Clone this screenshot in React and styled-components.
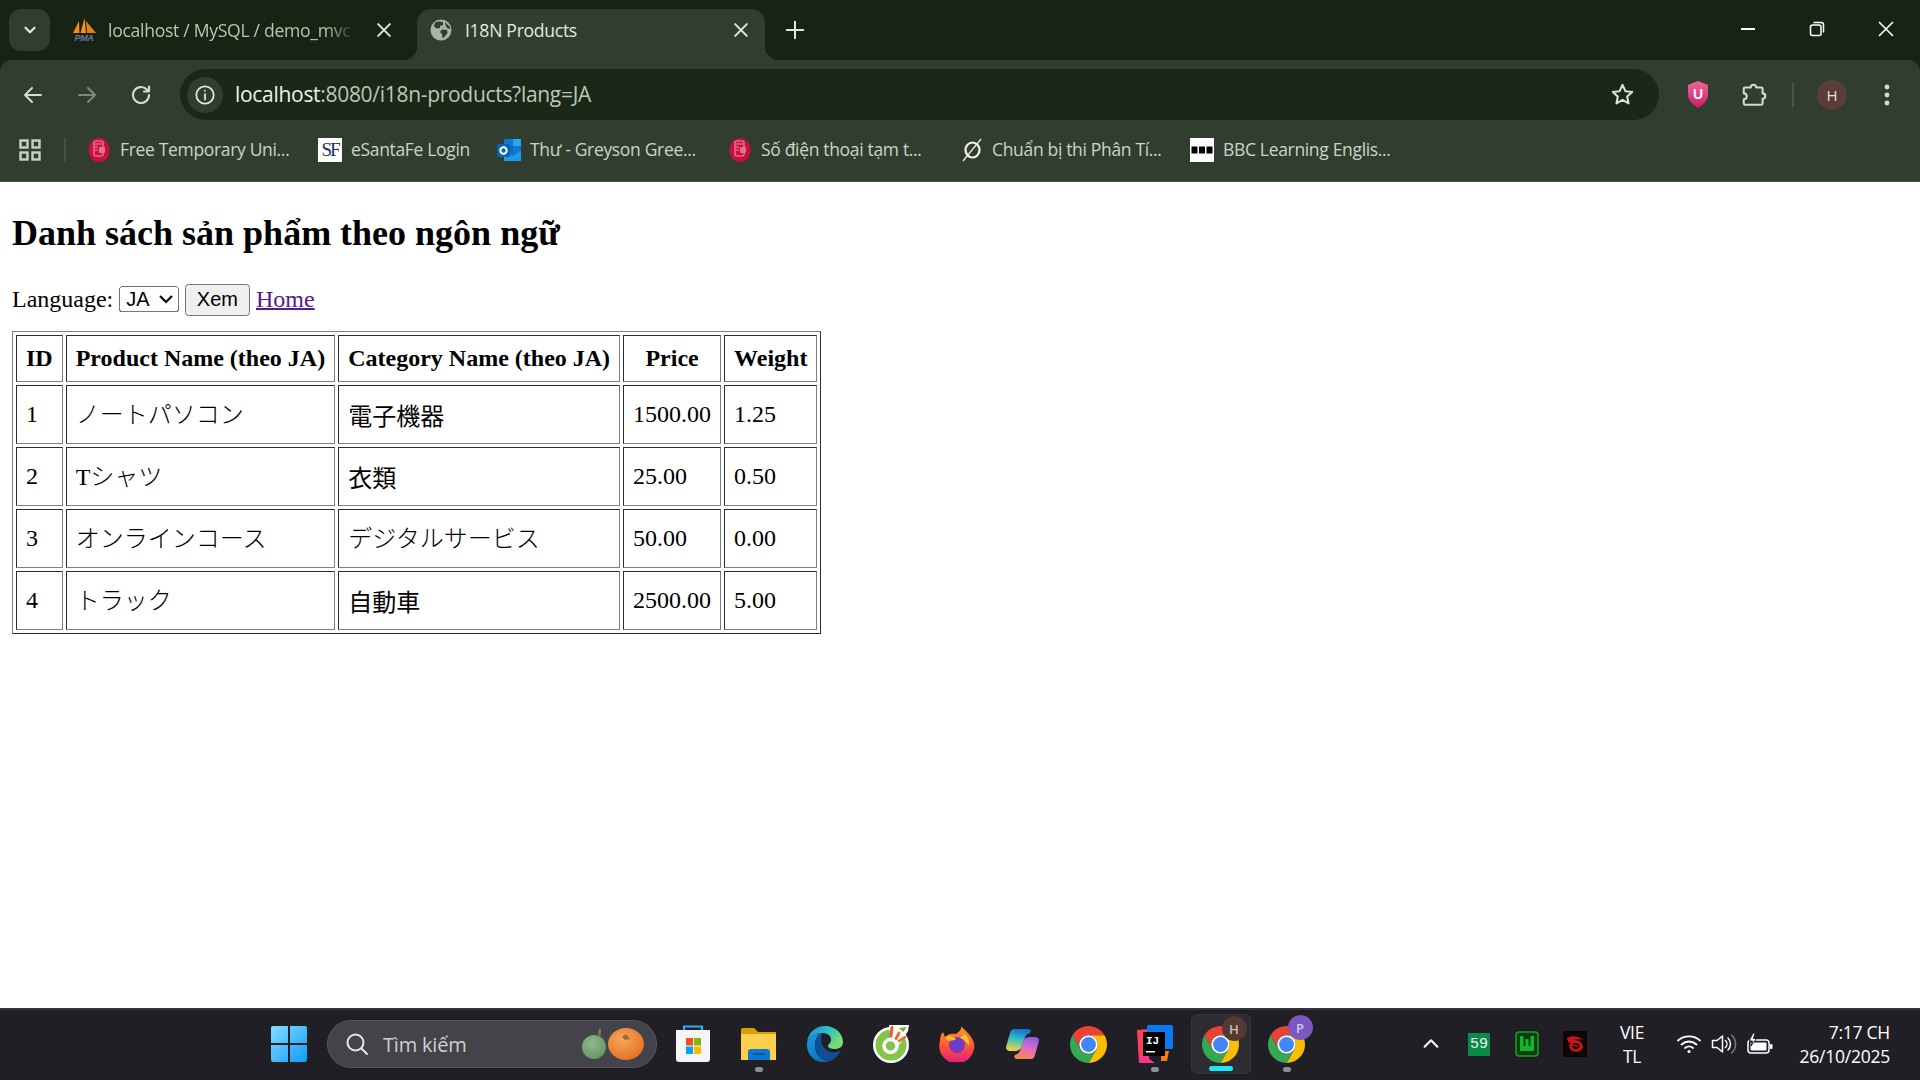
import React from "react";
import styled, { createGlobalStyle } from "styled-components";

const UI = `"Open Sans", "Noto Sans", sans-serif`;

const Global = createGlobalStyle`
  html, body { margin: 0; padding: 0; height: 100%; overflow: hidden; background: #fff; }
  #root { height: 100%; }
`;

const Screen = styled.div`
  width: 1920px; height: 1080px; display: flex; flex-direction: column; overflow: hidden;
`;

/* ---------- tab strip ---------- */
const TabStrip = styled.div`
  height: 60px; flex: none; background: #172413; display: flex; align-items: flex-start; padding: 9px 0 0 9px; box-sizing: border-box;
`;
const TabSearch = styled.div`
  width: 41px; height: 42px; border-radius: 12px; background: #313d2e; display: flex; align-items: center; justify-content: center; margin-right: 10px; color: #dfe8da;
`;
const Tab = styled.div`
  position: relative; width: 348px; height: 51px; margin-right: 9px; display: flex; align-items: center; box-sizing: border-box; padding: 0 14px 9px 12px;
  border-radius: 14px 14px 0 0; font: 400 17.6px ${UI}; letter-spacing: -0.3px;
  background: ${p => (p.$active ? "#313d2e" : "transparent")};
  color: ${p => (p.$active ? "#e3ebde" : "#b7c5b1")};
  ${p => p.$active && `
    &::before, &::after { content: ""; position: absolute; bottom: 0; width: 14px; height: 14px; }
    &::before { left: -14px; background: radial-gradient(circle at 0 0, transparent 14px, #313d2e 14.5px); }
    &::after { right: -14px; background: radial-gradient(circle at 100% 0, transparent 14px, #313d2e 14.5px); }
  `}
`;
const Favicon = styled.span`
  width: 24px; height: 24px; flex: none; display: flex; align-items: center; justify-content: center; margin-right: 12px;
`;
const TabTitle = styled.span`
  flex: 1; white-space: nowrap; overflow: hidden; margin-right: 18px;
  ${p => p.$fade && `-webkit-mask-image: linear-gradient(90deg, #000 88%, transparent 100%); mask-image: linear-gradient(90deg, #000 88%, transparent 100%);`}
`;
const TabClose = styled.span`
  width: 20px; height: 20px; flex: none; display: flex; align-items: center; justify-content: center; color: #dfe8da;
`;
const NewTab = styled.div`
  width: 26px; height: 42px; margin-left: 8px; display: flex; align-items: center; justify-content: center; color: #dfe8da;
`;
const WindowControls = styled.div`
  margin-left: auto; display: flex; height: 42px; margin-top: -1px; color: #fff;
`;
const WindowButton = styled.div`
  width: 69px; height: 42px; display: flex; align-items: center; justify-content: center;
`;

/* ---------- toolbar ---------- */
const Toolbar = styled.div`
  height: 122px; flex: none; box-sizing: border-box; background: #313d2e; border-radius: 12px 12px 0 0; border-bottom: 1px solid #4b4f4a; display: flex; flex-direction: column; margin-top: 0;
`;
const ToolbarBackdrop = styled.div`
  background: #172413; flex: none;
`;
const NavRow = styled.div`
  height: 69px; display: flex; align-items: center; padding: 0 0 0 6px; flex: none; box-sizing: border-box;
`;
const NavButton = styled.div`
  width: ${p => p.$w || 54}px; height: 40px; flex: none; display: flex; align-items: center; justify-content: center;
  color: ${p => (p.$dim ? "#7d8a78" : "#d3dccf")};
`;
const Omnibox = styled.div`
  width: 1479px; height: 51px; margin: 0 11px 0 12px; flex: none; background: #1b2717; border-radius: 26px; display: flex; align-items: center; box-sizing: border-box; padding: 0 24px 0 7px;
`;
const InfoChip = styled.div`
  width: 36px; height: 36px; border-radius: 50%; background: #313d2e; flex: none; display: flex; align-items: center; justify-content: center; color: #e3ebde;
`;
const Url = styled.div`
  margin: 0 0 2px 12px; font: 400 21px ${UI}; letter-spacing: -0.3px; color: #bcc8b6; white-space: nowrap;
`;
const UrlHost = styled.span`
  color: #eef3ea;
`;
const StarSlot = styled.div`
  margin-left: auto; display: flex; color: #dce5d7;
`;
const Separator = styled.div`
  width: 2px; height: 24px; background: #4a5746;
`;
const Avatar = styled.div`
  width: 30px; height: 30px; border-radius: 50%; background: #5b3d38; color: #eadfdc; font: 400 15px ${UI}; display: flex; align-items: center; justify-content: center;
`;
const BookmarkRow = styled.div`
  height: 52px; display: flex; align-items: flex-start; padding: 9px 0 0 0; box-sizing: border-box;
`;
const AppsSlot = styled.div`
  width: 46px; height: 24px; margin-left: 18px; flex: none; display: flex; align-items: center; color: #c9d3c4;
`;
const BookmarkDivider = styled.div`
  width: 2px; height: 24px; background: #46523f; margin-right: 22px; flex: none;
`;
const Bookmark = styled.div`
  display: flex; align-items: center; height: 24px; flex: none; width: ${p => p.$w}px;
`;
const BookmarkIcon = styled.span`
  width: ${p => p.$w || 24}px; height: 24px; flex: none; display: flex; align-items: center; justify-content: center; margin-right: ${p => p.$gap || 9}px;
  ${p => p.$white && "background: #fff;"}
`;
const BookmarkLabel = styled.span`
  font: 400 17.5px/24px ${UI}; letter-spacing: -0.33px; color: #cbd5c6; white-space: nowrap; margin-top: -2px;
`;
const SfLogo = styled.span`
  font: 400 19px "Liberation Serif", serif; color: #1d2f57; letter-spacing: -2px;
`;

/* ---------- page ---------- */
const Page = styled.main`
  flex: 1; min-height: 0; background: #fff; overflow: hidden;
`;
const Content = styled.div`
  zoom: 1.5; padding: 0 8px; display: flow-root; color: #000;
  font: 400 16px "Liberation Serif", "Noto Sans CJK JP", serif;
`;
const Heading = styled.h2`
  font-size: 24px; font-weight: 700; margin: 19.92px 0;
`;
const FilterForm = styled.form`
  margin: 0 0 10px;
`;
const LangSelect = styled.select`
  font: 400 13.333px "Liberation Sans", sans-serif; width: 39.7px;
`;
const SubmitButton = styled.button`
  font: 400 13.333px "Liberation Sans", sans-serif;
`;
const HomeLink = styled.a`
  color: #551a8b; text-decoration: underline;
`;
const Table = styled.table`
  border: 1px outset #808080; border-spacing: 2px; border-collapse: separate;
`;
const Th = styled.th`
  border: 1px inset #808080; padding: 6px; height: 31.3px; box-sizing: border-box; font-weight: 700; text-align: center; white-space: nowrap;
`;
const Td = styled.td`
  border: 1px inset #808080; height: 39.3px; box-sizing: border-box; white-space: nowrap;
  padding: ${p => (p.$kana ? "5px 6px 7px" : "6px")};
  font-weight: ${p => (p.$kana ? 300 : 400)};
`;

/* ---------- taskbar ---------- */
const Taskbar = styled.footer`
  height: 72px; flex: none; box-sizing: border-box; background: #201f26; border-top: 2px solid #35353b; display: flex; align-items: center; padding: 0 0 2px 256px; position: relative; color: #fff;
`;
const TaskItem = styled.div`
  width: 66px; height: 60px; flex: none; display: flex; align-items: center; justify-content: center; position: relative; box-sizing: border-box;
  ${p => p.$active && "background: #2c2c32; border-radius: 6px; border: 1px solid #34343a; width: 60px; margin: 0 3px;"}
`;
const RunDot = styled.span`
  position: absolute; left: 50%; bottom: 2px; transform: translateX(-50%); height: 5px; border-radius: 3px;
  width: ${p => (p.$wide ? 24 : 8)}px; background: ${p => (p.$wide ? "#1fe6f5" : "#8e8e93")};
`;
const Badge = styled.span`
  position: absolute; top: 1px; right: ${p => p.$r}px; width: 25px; height: 25px; border-radius: 50%;
  background: ${p => p.$bg}; color: ${p => p.$fg}; font: 600 13px ${UI}; display: flex; align-items: center; justify-content: center;
`;
const SearchBox = styled.div`
  width: 330px; height: 48px; flex: none; box-sizing: border-box; margin: 0 2.5px 0 5px; background: #434349; border: 1px solid #55555b; border-radius: 24px; display: flex; align-items: center; padding: 0 12px 0 17px; color: #e8e8e8;
`;
const SearchText = styled.span`
  font: 400 20px ${UI}; color: #cfcfd2; margin-left: 14px; letter-spacing: -0.2px;
`;
const SearchArt = styled.span`
  margin-left: auto; display: flex;
`;
const Tray = styled.div`
  margin-left: auto; display: flex; align-items: center; height: 100%; padding-right: 30px;
`;
const TrayIcon = styled.div`
  width: ${p => p.$w}px; flex: none; display: flex; justify-content: center; align-items: center;
`;
const GreenCount = styled.div`
  width: 22px; height: 23px; background: #0c8a47; color: #e8f7ee; font: 400 15px "Liberation Mono", monospace; display: flex; align-items: center; justify-content: center;
`;
const Lang = styled.div`
  width: 66px; margin-right: 7px; text-align: center; font: 400 17.5px/24px ${UI}; letter-spacing: -0.3px; flex: none;
`;
const Clock = styled.div`
  text-align: right; font: 400 17.5px/24px ${UI}; letter-spacing: -0.25px; flex: none; width: 112px;
`;

/* ---------- icons ---------- */
const Svg = ({ s = 24, vb = "0 0 24 24", children }) => (
  <svg width={s} height={s} viewBox={vb} fill="none">{children}</svg>
);
const Stroke = ({ s = 24, w = 2, children }) => (
  <svg width={s} height={s} viewBox="0 0 24 24" fill="none" stroke="currentColor" strokeWidth={w} strokeLinecap="round" strokeLinejoin="round">{children}</svg>
);
const PmaIcon = () => (
  <Svg>
    <path d="M1 15 7 3 7.500 15Z" fill="#f58a1f" />
    <path d="M8.500 15 12.500 0 14 15Z" fill="#f7941d" />
    <path d="M15 15 14 3 24 15Z" fill="#e98012" />
    <text x="12" y="22.500" textAnchor="middle" fontFamily="Liberation Sans" fontStyle="italic" fontWeight="700" fontSize="9" fill="#6a76b0">PMA</text>
  </Svg>
);
const GlobeIcon = () => (
  <svg width="22" height="22" viewBox="0 0 22 22">
    <circle cx="11" cy="11" r="10.500" fill="#aab3a7" />
    <path d="M5 3.500 9 2.500 13 3 13 6 10 7 10 9 7 9.500 4 7.500ZM12 10.500 17 11 17.500 14 14.500 18 12.500 19 12 15 10 13ZM15 3 20 8 20.500 10 17 9 15.500 6Z" fill="#313d2e" />
  </svg>
);
const ChromeLogo = ({ s = 37 }) => (
  <svg width={s} height={s} viewBox="4 4 40 40">
    <path d="M6.680 14A20 20 0 0 1 41.320 14L24 14A10 10 0 0 0 15.340 29Z" fill="#ea4335" />
    <path d="M41.320 14A20 20 0 0 1 24 44L32.660 29A10 10 0 0 0 24 14Z" fill="#fbbc04" />
    <path d="M24 44A20 20 0 0 1 6.680 14L15.340 29A10 10 0 0 0 32.660 29Z" fill="#34a853" />
    <circle cx="24" cy="24" r="10" fill="#fff" />
    <circle cx="24" cy="24" r="8" fill="#4285f4" />
  </svg>
);
const TempMail = () => (
  <svg width="22" height="24" viewBox="0 0 22 24">
    <ellipse cx="11" cy="12" rx="10.500" ry="12" fill="#c8103f" />
    <rect x="6" y="3" width="9" height="15" rx="1.500" fill="none" stroke="#eb8ea6" strokeWidth="1.200" />
    <rect x="11" y="9" width="6" height="6" rx="1" fill="#e5708e" />
    <path d="M7 6h7M7 9h3M7 12h3" stroke="#eb8ea6" />
  </svg>
);
const OutlookIcon = () => (
  <svg width="25" height="24" viewBox="0 0 25 24">
    <rect x="7" y="1" width="17" height="22" rx="1.500" fill="#0f78d4" />
    <rect x="16" y="1" width="8" height="7" fill="#28a8ea" />
    <rect x="7" y="8" width="9" height="7" fill="#0f6cbd" />
    <path d="M7 14l8.500 4 8.500-5V23H7Z" fill="#1e9be6" />
    <rect x="0" y="6" width="13" height="13" rx="1.500" fill="#0a64b5" />
    <circle cx="6.500" cy="12.500" r="3.200" fill="none" stroke="#fff" strokeWidth="2" />
  </svg>
);
const NoSymbol = () => (
  <svg width="25" height="24" viewBox="0 0 25 24" fill="none" stroke="#f1f4ef">
    <ellipse cx="12.500" cy="12" rx="7" ry="7.500" strokeWidth="2.200" />
    <path d="M21 1 3 23" strokeWidth="1.200" />
  </svg>
);
const BbcIcon = () => (
  <svg width="24" height="24" viewBox="0 0 24 24">
    <rect x="1.500" y="8.500" width="6" height="7" fill="#000" />
    <rect x="9" y="8.500" width="6" height="7" fill="#000" />
    <rect x="16.500" y="8.500" width="6" height="7" fill="#000" />
  </svg>
);
const ShieldU = () => (
  <svg width="22" height="27" viewBox="0 0 22 27">
    <defs>
      <linearGradient id="sh" x1="0" y1="0" x2="0" y2="1">
        <stop offset="0" stopColor="#f0669a" /><stop offset="1" stopColor="#cf1a63" />
      </linearGradient>
    </defs>
    <path d="M11 0 21 4V14C21 20 15 24.500 11 27 7 24.500 1 20 1 14V4Z" fill="url(#sh)" />
    <text x="11" y="18" textAnchor="middle" fontFamily="Liberation Sans" fontWeight="700" fontSize="14" fill="#fff">U</text>
  </svg>
);
const PuzzleIcon = () => (
  <svg width="28" height="28" viewBox="0 0 26 26" fill="none" stroke="currentColor" strokeWidth="1.900" strokeLinejoin="round">
    <path d="M4.500 6H10a2.500 2.500 0 0 1 5 0H20a1 1 0 0 1 1 1v4.500a2.500 2.500 0 0 1 0 5V21a1 1 0 0 1-1 1H4.500a1 1 0 0 1-1-1V17a2.500 2.500 0 0 0 0-5.500V7a1 1 0 0 1 1-1Z" />
  </svg>
);
const DotsIcon = () => (
  <svg width="6" height="24" viewBox="0 0 6 24" fill="currentColor">
    <circle cx="3" cy="4" r="2.400" /><circle cx="3" cy="12" r="2.400" /><circle cx="3" cy="20" r="2.400" />
  </svg>
);
const AppsIcon = () => (
  <svg width="24" height="24" viewBox="0 0 24 24" fill="none" stroke="currentColor" strokeWidth="2.400">
    <rect x="2.500" y="2.500" width="7" height="7" /><rect x="14.500" y="2.500" width="7" height="7" />
    <rect x="2.500" y="14.500" width="7" height="7" /><rect x="14.500" y="14.500" width="7" height="7" />
  </svg>
);
const StartIcon = () => (
  <svg width="36" height="36" viewBox="0 0 36 36">
    <defs>
      <linearGradient id="st" x1="0" y1="0" x2="1" y2="1">
        <stop offset="0" stopColor="#86dcff" /><stop offset="1" stopColor="#0d9cf5" />
      </linearGradient>
    </defs>
    <path d="M2 0H17V17H0V2A2 2 0 0 1 2 0ZM19 0H34A2 2 0 0 1 36 2V17H19ZM0 19H17V36H2A2 2 0 0 1 0 34ZM19 19H36V34A2 2 0 0 1 34 36H19Z" fill="url(#st)" />
  </svg>
);
const StoreIcon = () => (
  <svg width="36" height="38" viewBox="0 0 36 38">
    <path d="M9 6V1.500H27V6" fill="none" stroke="#27b0ee" strokeWidth="2.200" />
    <path d="M1 5H35V34A3 3 0 0 1 32 37H4A3 3 0 0 1 1 34Z" fill="#f6f6f6" />
    <rect x="11" y="13" width="7" height="7.500" fill="#f25022" />
    <rect x="19" y="13" width="7" height="7.500" fill="#7fba00" />
    <rect x="11" y="21.500" width="7" height="7.500" fill="#00a4ef" />
    <rect x="19" y="21.500" width="7" height="7.500" fill="#ffb900" />
  </svg>
);
const FolderIcon = () => (
  <svg width="37" height="34" viewBox="0 0 37 34">
    <path d="M1 3A2 2 0 0 1 3 1H14L18 5H36V33H1Z" fill="#d6a200" />
    <path d="M1 7H36V33H1Z" fill="#fdcf4a" />
    <path d="M8 33V25A3 3 0 0 1 11 22H27A3 3 0 0 1 30 25V33Z" fill="#0d77d1" />
    <rect x="13" y="26" width="12" height="2" fill="#07559e" />
  </svg>
);
const EdgeIcon = () => (
  <svg width="36" height="36" viewBox="0 0 36 36">
    <defs>
      <linearGradient id="ed" x1="0" y1="0" x2="1" y2="0.500">
        <stop offset="0" stopColor="#1a8fd8" /><stop offset="0.550" stopColor="#2fbfc4" /><stop offset="1" stopColor="#78e06a" />
      </linearGradient>
      <linearGradient id="ed2" x1="0" y1="0" x2="0.600" y2="1">
        <stop offset="0" stopColor="#1a9be0" /><stop offset="1" stopColor="#1170c4" />
      </linearGradient>
    </defs>
    <path d="M0 17C1 6 9 0 18 0C29 0 36 8 36 16C36 21 32 23 28 23C24 23 21 22 21 20C21 18 24 17 24 14C24 9 20 7 15 7C8 7 2 10 0 17Z" fill="url(#ed)" />
    <path d="M0 17C2 10 8 7 15 7C10 9 8 14 8 20C8 28 13 33 21 35.500C19.500 36 18 36 17 36C7 36 -1 28 0 17Z" fill="url(#ed2)" />
    <path d="M15 7C10 9 8 14 8 20C8 28 13 33 21 35.500C27 34.500 32 29 34 24C30 27 24 27 20 24.500C15 21 13 16 15 7Z" fill="#0f4f95" />
  </svg>
);
const CocCocIcon = () => (
  <svg width="36" height="38" viewBox="0 0 36 38">
    <circle cx="18" cy="20" r="18" fill="#fff" />
    <circle cx="18" cy="20" r="15.500" fill="#83c548" />
    <path d="M16 0H36L35 6 26 20 18 16Z" fill="#fff" />
    <circle cx="17.500" cy="21" r="6.500" fill="#83c548" stroke="#fff" strokeWidth="3.500" />
    <path d="M19 2.500 18 11" stroke="#ef5a2e" strokeWidth="3" strokeLinecap="round" />
    <path d="M26 8 23 13.500" stroke="#ef6a2e" strokeWidth="3" strokeLinecap="round" />
    <path d="M32 12 26 16" stroke="#ef6a2e" strokeWidth="2.500" strokeLinecap="round" />
    <path d="M26 3 34 2 30 7Z" fill="#6fb33f" />
  </svg>
);
const FirefoxIcon = () => (
  <svg width="36" height="36" viewBox="0 0 36 36">
    <defs>
      <linearGradient id="ff" x1="0.500" y1="0" x2="0.500" y2="1">
        <stop offset="0" stopColor="#ff9a1f" /><stop offset="0.600" stopColor="#ff4f3a" /><stop offset="1" stopColor="#e31587" />
      </linearGradient>
    </defs>
    <path d="M22 0C25 4 33 9 35 17A17.500 17.500 0 1 1 1 15C1 11 2 8 4 6L6 11C9 8 13 7 17 8 21 5 23 3 22 0Z" fill="url(#ff)" />
    <circle cx="18" cy="19" r="8" fill="#6e3cc6" />
    <path d="M6 11C10 9 14 10 17 13 15 15 11 15 8 14Z" fill="#ffbd1f" />
    <path d="M26 8C29 11 31 15 30 20 28 16 25 13 21 12Z" fill="#ffca2b" />
  </svg>
);
const CopilotIcon = () => (
  <svg width="33" height="30" viewBox="0 0 33 30">
    <defs>
      <linearGradient id="c1" x1="0.500" y1="0" x2="0.300" y2="1">
        <stop offset="0" stopColor="#1470e0" /><stop offset="0.450" stopColor="#33c0bd" /><stop offset="1" stopColor="#f5d53a" />
      </linearGradient>
      <linearGradient id="c2" x1="0.700" y1="0" x2="0.400" y2="1">
        <stop offset="0" stopColor="#8a5ee6" /><stop offset="0.550" stopColor="#e56cc0" /><stop offset="1" stopColor="#fa8a4d" />
      </linearGradient>
    </defs>
    <path d="M8 0H22C25 0 25 2 24 4C20 5 19 8 18 11L16 17C15 21 12 22 8 22H4C1 22-.5 20 .3 17L4 4C5 1 6 0 8 0Z" fill="url(#c1)" />
    <path d="M25 30H11C8 30 8 28 9 26C13 25 14 22 15 19L17 13C18 9 21 8 25 8H29C32 8 33.500 10 32.700 13L29 26C28 29 27 30 25 30Z" fill="url(#c2)" />
  </svg>
);
const IntellijIcon = () => (
  <svg width="36" height="38" viewBox="0 0 36 38">
    <path d="M0 5 12 4 12 36 2 38Z" fill="#fd3f5c" />
    <rect x="10" y="0" width="26" height="24" rx="1.500" fill="#0a78f0" />
    <path d="M24 26H32L30 36H24Z" fill="#f97a12" />
    <path d="M4 28 18 38H3Z" fill="#ff318c" />
    <rect x="6" y="7" width="22" height="24" fill="#000" />
    <text x="9" y="19" fontFamily="Liberation Mono" fontWeight="700" fontSize="11" fill="#fff">IJ</text>
    <rect x="9" y="26" width="9" height="1.500" fill="#fff" />
  </svg>
);
const Gourds = () => (
  <svg width="62" height="34" viewBox="0 0 62 34">
    <defs>
      <radialGradient id="pk" cx="0.400" cy="0.350" r="0.800">
        <stop offset="0" stopColor="#f9a65a" /><stop offset="1" stopColor="#dd6a1c" />
      </radialGradient>
      <radialGradient id="gr" cx="0.400" cy="0.350" r="0.800">
        <stop offset="0" stopColor="#93b88c" /><stop offset="1" stopColor="#5c8f62" />
      </radialGradient>
    </defs>
    <path d="M16 8 17 2 19 2 18.500 9Z" fill="#8a7a55" />
    <ellipse cx="12" cy="20" rx="12" ry="12" fill="url(#gr)" />
    <ellipse cx="44" cy="17" rx="18" ry="16" fill="url(#pk)" />
    <path d="M40 10 44 7 48 12 43 13Z" fill="#a16a35" />
  </svg>
);
const WifiIcon = () => (
  <svg width="24" height="20" viewBox="0 0 24 20" fill="none" stroke="#fff" strokeWidth="1.800" strokeLinecap="round">
    <path d="M1 6.500C7 1 17 1 23 6.500M4.500 10.500C9 6.500 15 6.500 19.500 10.500M8 14C10.500 12 13.500 12 16 14" />
    <circle cx="12" cy="17.500" r="1.500" fill="#fff" stroke="none" />
  </svg>
);
const SpeakerIcon = () => (
  <svg width="26" height="24" viewBox="0 0 26 24" fill="none" stroke="#fff" strokeWidth="1.500" strokeLinejoin="round">
    <path d="M1.500 8.500H6L11.500 4V20L6 15.500H1.500Z" />
    <path d="M14.500 8.500A5 5 0 0 1 14.500 15.500M17 6A8.500 8.500 0 0 1 17 18" strokeLinecap="round" />
    <path d="M20.500 3A12 12 0 0 1 20.500 21" stroke="#77777c" strokeLinecap="round" />
  </svg>
);
const BatteryIcon = () => (
  <svg width="26" height="22" viewBox="0 0 26 22" fill="none">
    <rect x="1" y="7" width="21" height="13" rx="3" stroke="#fff" strokeWidth="1.500" />
    <rect x="3.500" y="9.500" width="16" height="8" rx="1" fill="#fff" />
    <rect x="23" y="11" width="2.500" height="5" rx="1" fill="#fff" />
    <path d="M6 0 2 8H5.500L4 13 9.500 5.500H6.500L8 0Z" fill="#fff" stroke="#201f26" strokeWidth="1" />
  </svg>
);
const WIcon = () => (
  <svg width="24" height="26" viewBox="0 0 24 26">
    <rect x="1" y="1" width="22" height="24" rx="3" fill="#0a3d10" stroke="#16a320" strokeWidth="1.500" />
    <path d="M5 5V20H19V5H15.500V15H13.500V8H10.500V15H8.500V5Z" fill="#15b52a" />
  </svg>
);
const GarenaIcon = () => (
  <svg width="24" height="26" viewBox="0 0 24 26">
    <rect width="24" height="26" fill="#0e0506" />
    <path d="M4 7C9 4 15 5 21 9 17 8 14 8 11 9 16 9 20 12 20 16 19 20 14 22 10 20 6 19 5 14 8 12 6 12 4 10 4 7Z" fill="#c8141c" />
    <path d="M10 14C12 12 16 13 16 15.500 15 18 11 18 10 16H14" fill="none" stroke="#0e0506" strokeWidth="1.500" />
  </svg>
);

const rows = [
  { id: "1", name: "ノートパソコン", cat: "電子機器", catKana: false, price: "1500.00", weight: "1.25" },
  { id: "2", name: "Tシャツ", cat: "衣類", catKana: false, price: "25.00", weight: "0.50" },
  { id: "3", name: "オンラインコース", cat: "デジタルサービス", catKana: true, price: "50.00", weight: "0.00" },
  { id: "4", name: "トラック", cat: "自動車", catKana: false, price: "2500.00", weight: "5.00" },
];

export default function App() {
  return (
    <Screen>
      <Global />
      <TabStrip>
        <TabSearch>
          <Stroke s={18} w={3}><path d="M6 9l6 6 6-6" /></Stroke>
        </TabSearch>
        <Tab>
          <Favicon><PmaIcon /></Favicon>
          <TabTitle $fade>localhost / MySQL / demo_mvc</TabTitle>
          <TabClose><Stroke s={20} w={2.400}><path d="M5 5l14 14M19 5 5 19" /></Stroke></TabClose>
        </Tab>
        <Tab $active>
          <Favicon><GlobeIcon /></Favicon>
          <TabTitle>I18N Products</TabTitle>
          <TabClose><Stroke s={20} w={2.400}><path d="M5 5l14 14M19 5 5 19" /></Stroke></TabClose>
        </Tab>
        <NewTab><Stroke s={22} w={2.200}><path d="M12 3v18M3 12h18" /></Stroke></NewTab>
        <WindowControls>
          <WindowButton><svg width="14" height="2"><rect width="14" height="2" fill="#fff" /></svg></WindowButton>
          <WindowButton>
            <svg width="16" height="16" viewBox="0 0 16 16" fill="none" stroke="#fff" strokeWidth="1.500">
              <rect x="1.500" y="4" width="10.500" height="10.500" rx="2" />
              <path d="M4.500 1.500H12A2.500 2.500 0 0 1 14.500 4V11.500" />
            </svg>
          </WindowButton>
          <WindowButton>
            <svg width="16" height="16" viewBox="0 0 16 16" stroke="#fff" strokeWidth="1.600"><path d="M1 1l14 14M15 1 1 15" /></svg>
          </WindowButton>
        </WindowControls>
      </TabStrip>

      <ToolbarBackdrop>
        <Toolbar>
          <NavRow>
            <NavButton><Stroke s={24} w={2}><path d="M20 12H5M11 5l-7 7 7 7" /></Stroke></NavButton>
            <NavButton $dim><Stroke s={24} w={2}><path d="M4 12h15M13 5l7 7-7 7" /></Stroke></NavButton>
            <NavButton>
              <Stroke s={24} w={2.100}><path d="M20 12a8 8 0 1 1-2.400-5.700L20 8.500M20 3.500v5h-5" /></Stroke>
            </NavButton>
            <Omnibox>
              <InfoChip>
                <Stroke s={22} w={1.900}><circle cx="12" cy="12" r="9.500" /><path d="M12 11v6M12 7.200v.1" /></Stroke>
              </InfoChip>
              <Url><UrlHost>localhost</UrlHost>:8080/i18n-products?lang=JA</Url>
              <StarSlot>
                <Stroke s={25} w={2}><path d="M12 2.800l2.800 6 6.500.8-4.800 4.400 1.300 6.500L12 17.200l-5.800 3.300 1.300-6.500L2.700 9.600l6.500-.8z" /></Stroke>
              </StarSlot>
            </Omnibox>
            <NavButton $w={56}><ShieldU /></NavButton>
            <NavButton $w={55}><PuzzleIcon /></NavButton>
            <NavButton $w={23}><Separator /></NavButton>
            <NavButton $w={56}><Avatar>H</Avatar></NavButton>
            <NavButton $w={54}><DotsIcon /></NavButton>
          </NavRow>
          <BookmarkRow>
            <AppsSlot><AppsIcon /></AppsSlot>
            <BookmarkDivider />
            <Bookmark $w={230}><BookmarkIcon $w={22} $gap={10}><TempMail /></BookmarkIcon><BookmarkLabel>Free Temporary Uni...</BookmarkLabel></Bookmark>
            <Bookmark $w={179}><BookmarkIcon $white $gap={9}><SfLogo>SF</SfLogo></BookmarkIcon><BookmarkLabel>eSantaFe Login</BookmarkLabel></Bookmark>
            <Bookmark $w={232}><BookmarkIcon $w={25} $gap={8}><OutlookIcon /></BookmarkIcon><BookmarkLabel>Thư - Greyson Gree...</BookmarkLabel></Bookmark>
            <Bookmark $w={231}><BookmarkIcon $w={22} $gap={10}><TempMail /></BookmarkIcon><BookmarkLabel>Số điện thoại tạm t...</BookmarkLabel></Bookmark>
            <Bookmark $w={230}><BookmarkIcon $w={25} $gap={7}><NoSymbol /></BookmarkIcon><BookmarkLabel>Chuẩn bị thi Phân Tí...</BookmarkLabel></Bookmark>
            <Bookmark $w={210}><BookmarkIcon $white $gap={9}><BbcIcon /></BookmarkIcon><BookmarkLabel>BBC Learning Englis...</BookmarkLabel></Bookmark>
          </BookmarkRow>
        </Toolbar>
      </ToolbarBackdrop>

      <Page>
        <Content>
          <Heading>Danh sách sản phẩm theo ngôn ngữ</Heading>
          <FilterForm onSubmit={e => e.preventDefault()}>
            Language:{" "}
            <LangSelect defaultValue="JA">
              <option>VI</option>
              <option>EN</option>
              <option>JA</option>
            </LangSelect>{" "}
            <SubmitButton type="submit">Xem</SubmitButton>{" "}
            <HomeLink href="#home">Home</HomeLink>
          </FilterForm>
          <Table>
            <thead>
              <tr>
                <Th>ID</Th>
                <Th>Product Name (theo JA)</Th>
                <Th>Category Name (theo JA)</Th>
                <Th>Price</Th>
                <Th>Weight</Th>
              </tr>
            </thead>
            <tbody>
              {rows.map(r => (
                <tr key={r.id}>
                  <Td>{r.id}</Td>
                  <Td $kana>{r.name}</Td>
                  <Td $kana={r.catKana}>{r.cat}</Td>
                  <Td>{r.price}</Td>
                  <Td>{r.weight}</Td>
                </tr>
              ))}
            </tbody>
          </Table>
        </Content>
      </Page>

      <Taskbar>
        <TaskItem><StartIcon /></TaskItem>
        <SearchBox>
          <Stroke s={24} w={2}><circle cx="10.500" cy="10.500" r="8" /><path d="M16.500 16.500 22 22" /></Stroke>
          <SearchText>Tìm kiếm</SearchText>
          <SearchArt><Gourds /></SearchArt>
        </SearchBox>
        <TaskItem><StoreIcon /></TaskItem>
        <TaskItem><FolderIcon /><RunDot /></TaskItem>
        <TaskItem><EdgeIcon /></TaskItem>
        <TaskItem><CocCocIcon /></TaskItem>
        <TaskItem><FirefoxIcon /></TaskItem>
        <TaskItem><CopilotIcon /></TaskItem>
        <TaskItem><ChromeLogo /></TaskItem>
        <TaskItem><IntellijIcon /><RunDot /></TaskItem>
        <TaskItem $active><ChromeLogo /><Badge $r={3} $bg="#533b33" $fg="#c9bcb6">H</Badge><RunDot $wide /></TaskItem>
        <TaskItem><ChromeLogo /><Badge $r={7} $bg="#7a58c0" $fg="#d7c9f0">P</Badge><RunDot /></TaskItem>
        <Tray>
          <TrayIcon $w={48}><Stroke s={22} w={2.200}><path d="M5 15l7-7 7 7" /></Stroke></TrayIcon>
          <TrayIcon $w={48}><GreenCount>59</GreenCount></TrayIcon>
          <TrayIcon $w={48}><WIcon /></TrayIcon>
          <TrayIcon $w={48}><GarenaIcon /></TrayIcon>
          <Lang>VIE<br />TL</Lang>
          <TrayIcon $w={34}><WifiIcon /></TrayIcon>
          <TrayIcon $w={36}><SpeakerIcon /></TrayIcon>
          <TrayIcon $w={36}><BatteryIcon /></TrayIcon>
          <Clock>7:17 CH<br />26/10/2025</Clock>
        </Tray>
      </Taskbar>
    </Screen>
  );
}
